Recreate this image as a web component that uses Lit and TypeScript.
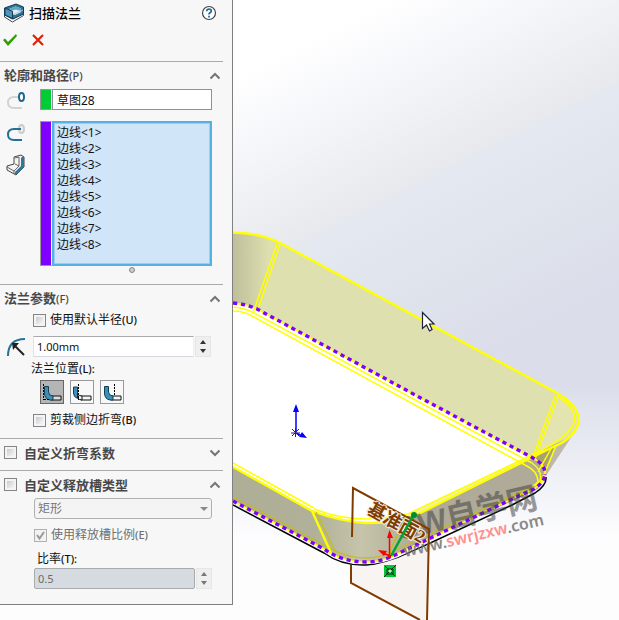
import { LitElement, html, svg, css } from "lit";
import { customElement } from "lit/decorators.js";

const BACK_EDGE = "M233 303Q246 304 257 309L430 403L533 458Q546 465 545 475";
const FRONT_EDGE = "M233 501L324 549Q342 562 366 562Q380 562 393 556L510 500L534 489Q545 482 545 473";

@customElement("model-view")
class ModelView extends LitElement {
  static styles = css`
    :host { display: block; }
    svg { display: block; width: 100%; height: 100%; }
    .y { fill: none; stroke: #ffff00; stroke-width: 1.5; }
    .thick { stroke-width: 2.4; }
    .dim { fill: none; stroke: #c4be16; stroke-width: 1.3; }
    .dots { fill: none; stroke: #8000ff; stroke-width: 3.4; stroke-dasharray: 4.2 3.8; }
    .brown { fill: none; stroke: #803c00; stroke-width: 2; }
    .plane { font: bold 18px "Liberation Serif", "Noto Sans CJK SC", sans-serif; fill: #803c00; stroke: #f4eee0; stroke-width: 2; paint-order: stroke; }
    .mark { font: bold 31px "Liberation Sans", "Noto Sans CJK SC", sans-serif; fill: #404040; opacity: .52; }
    .site { font: 600 16px "Noto Sans", sans-serif; fill: #6c6c6c; opacity: .8; }
    .red { fill: #ff7676; }
  `;
  render() {
    return html`<svg viewBox="233 0 386 620" preserveAspectRatio="xMinYMin meet" role="img" aria-label="Model">
      ${svg`
      <defs>
        <linearGradient id="corner" x1="233" x2="270" y1="0" y2="0" gradientUnits="userSpaceOnUse">
          <stop offset="0" stop-color="#bfbf9b"/><stop offset="1" stop-color="#dfe0b0"/>
        </linearGradient>
        <linearGradient id="front" x1="233" x2="430" y1="0" y2="0" gradientUnits="userSpaceOnUse">
          <stop offset="0" stop-color="#aead95"/><stop offset=".42" stop-color="#b1b099"/><stop offset=".65" stop-color="#c6c5ab"/><stop offset="1" stop-color="#aaa492"/>
        </linearGradient>
        <linearGradient id="side" x1="540" x2="566" y1="0" y2="10" gradientUnits="userSpaceOnUse">
          <stop offset="0" stop-color="#8d855f"/><stop offset="1" stop-color="#bdb8a9"/>
        </linearGradient>
      </defs>
      <path fill="#fff" d="M233 303L257 309L533 460L545 475L366 560L233 500Z"/>
      <path fill="#dfe0b0" d="M279 244L557 393Q576 404 578 420Q576 437 553 447L535 458L257 309Z"/>
      <path fill="#e3e4b0" d="M557 393Q576 404 578 420Q576 437 537 453Z"/>
      <path fill="url(#corner)" d="M233 232Q260 233 280 243L257 309Q246 304 233 303Z"/>
      <path fill="url(#side)" d="M572 436L547 474L530 490L520 460Z"/>
      <path fill="#b0aa98" d="M536 457L410 516L384 558L510 502L538 489L545 474Z"/>
      <path fill="url(#front)" d="M233 467L312 510Q342 524 383 522L412 515L420 543L393 556Q380 562 366 562Q342 562 324 549L233 501Z"/>
      <path fill="#f3f2a6" d="M553 447L410 518L406 514L535 453Z"/>
      <path fill="#a7a071" d="M532 458L554 447L545 471L538 463Z"/>
      <path class="y thick" d="M233 232.500Q260 233 280 243L557 393Q578 405 579 420Q576 438 553 447L410 518Q392 523 365 523Q338 521 312 511L233 467"/>
      <path class="y" d="M557 396Q575 407 575 420Q571 436 536 453L408 514M314 509Q340 519 366 519Q390 518 407 514M233 463L314 508"/>
      <path class="y" d="M280 244L258 309M277 244L253 313M559 394L535 459M555 396L533 457"/>
      <path class="y" d="M233 307Q245 308 254 313L532 463Q543 471 540 481L535 486M233 311Q244 311 252 316L525 465Q538 471 538 482L533 486"/>
      <path class="y" d="M556 446L540 484M552 447L538 472"/>
      <path class="dim" d="M233 497L326 546Q345 558 366 558Q380 558 391 552L507 498L534 486M316 512L335 551M405 518L389 553"/>
      <path class="y thick" d="M312 511L331 553"/>
      <path fill="none" stroke="#000" stroke-width="1.5" d="M233 505L324 553Q342 566 366 565Q382 565 398 558L512 505L535 493Q547 485 546 477"/>
      <path class="y" d=${FRONT_EDGE}></path>
      <path class="dots" d=${FRONT_EDGE}></path>
      <path class="y" d=${BACK_EDGE}></path>
      <path class="dots" d=${BACK_EDGE}></path>
      <path fill="#f8f4f2" d="M351 567Q370 568 398 558L428 545L427 620L418 620L351 583Z"/>
      <text class="mark" transform="translate(400 540) rotate(-13)">SW自学网</text>
      <text class="site" transform="translate(405 557) rotate(-13)">www.<tspan class="red">swrjzxw</tspan>.com</text>
      <path class="brown" d="M352 537L353 488L429 529L427 620M351 565V583L420 620"/>
      <text class="plane" transform="translate(366 513) rotate(29)">基准面2</text>
      <path stroke="#00a52e" stroke-width="2.500" d="M391 556L413 516"/>
      <circle cx="414" cy="515" r="3" fill="#008c2c"/>
      <path stroke="#f00" stroke-width="1.5" d="M389.500 557V537M390 556L383 553"/>
      <path fill="#f00" d="M389.500 530L393 538H387ZM378 550L387 551L384 556ZM388 555H391V558H388Z"/>
      <path fill="#00c832" d="M384 565H396V577H384Z"/>
      <path fill="none" stroke="#102818" d="M384 577L396 565M385 566L395 576M387 569H393V574H387Z"/>
      <circle cx="390" cy="571" r="1.500" fill="#cfe8d0"/>
      <path stroke="#00f" stroke-width="1.5" fill="none" d="M296 432V412M296 433L302 436"/>
      <path fill="#00f" d="M296 404L299 412H293ZM307 438L302 432L299 437Z"/>
      <path stroke="#3a108c" fill="none" d="M291 433H300M295.500 428V437M292 429L299 436M299 429L292 436"/>
      <path fill="#fff" stroke="#1c2038" stroke-width="1.200" d="M422.500 312.500V328.500L426.500 325L429.500 331L432 329.500L429.500 324H434Z"/>
      `}
    </svg>`;
  }
}

const flange = (dash: number, pressed: boolean) => html`
  <button class="pos ${pressed ? "on" : ""}" aria-label="Flange position" aria-pressed=${pressed}>
    <svg width="22" height="22" viewBox="0 0 22 22">
      <path d="M10 15H20V19H10Z" fill=${pressed ? "#ddd" : "#f4f4f4"} stroke="#111"/>
      <path d=${dash === 7 ? "M2.500 6H6.500V17.500Q2.500 16 2.500 12Z" : "M3.500 5.500H7.500V11Q8 15 12 15V19H9Q3.500 18 3.500 12Z"} fill="#3e8fb4" stroke="#104058"/>
      <path d=${dash === 7 ? "M7 13Q8 15 11 15V19Q8 19 7 17Z" : ""} fill="#f4f4f4" stroke="#111"/>
      <path d="M${dash}.500 3V${dash === 13 ? 15 : 19}" stroke="#000" stroke-dasharray="2 1"/>
      <path d=${dash === 2 ? "M3 18.500H9" : ""} stroke="#000" stroke-dasharray="2 1"/>
    </svg>
  </button>`;

const chevron = (down = false) => html`<button class="fold" aria-label="Toggle section">
  <svg width="12" height="8" viewBox="0 0 12 8"><path d=${down ? "M1.500 1.500L6 6L10.500 1.500" : "M1.500 6.500L6 2L10.500 6.500"} fill="none" stroke="#757575" stroke-width="2"/></svg></button>`;

const spinner = () => html`<span class="spin">
  <button aria-label="Increase"><svg width="6" height="4"><path d="M0 4L3 0L6 4Z"/></svg></button>
  <button aria-label="Decrease"><svg width="6" height="4"><path d="M0 0H6L3 4Z"/></svg></button></span>`;

@customElement("app-root")
class AppRoot extends LitElement {
  static styles = css`
    :host {
      display: flex; align-items: flex-start; min-height: 100vh; overflow: hidden;
      font: 12px/16px "Noto Sans", "Noto Sans CJK SC", sans-serif; color: #111;
      background: linear-gradient(to bottom, #fff0 62%, #fdfdfe 87%),
        linear-gradient(153deg, #fff 21%, #f4f5f9 31%, #e9eaed 41%, #e4e8f0 43%, #dfe3ec 54%, #dbdeea 64%);
    }
    * { box-sizing: border-box; }
    button { padding: 0; border: 0; background: none; font: inherit; }
    svg { display: block; flex: none; }
    model-view { flex: 1; min-width: 0; height: 100vh; }
    .panel { flex: none; width: 233px; background: #f7f7f7; border-right: 1px solid #808080; border-bottom: 1px solid #808080; }
    .title { display: flex; align-items: center; height: 26px; padding: 0 15px 0 4px; gap: 5px; }
    h1 { flex: 1; margin: 0; font-size: 13px; font-weight: 500; color: #000; }
    .actions { display: flex; align-items: center; gap: 14px; height: 35px; padding: 0 2px 7px; }
    section { margin-right: 9px; border-top: 1px solid #aaa; }
    header { display: flex; align-items: center; height: 27px; padding: 0 2px 0 4px; }
    h2 { flex: 1; margin: 0; font-size: 13px; font-weight: bold; color: #484848; }
    h2 label { margin-left: 7px; }
    small { font-size: 11px; font-weight: 500; }
    .folded { padding-bottom: 4px; }
    .body { display: flex; flex-direction: column; }
    .row { display: flex; align-items: center; }
    .selection { display: flex; padding: 0 11px 0 6px; }
    .icons { display: flex; flex-direction: column; gap: 11px; width: 34px; }
    .bar { width: 12px; border: 1px solid #999; border-right: 1px solid #f7f7f7; }
    .green { background: #00cc33; }
    .purple { background: #8000ff; }
    .text { flex: 1; min-width: 0; height: 21px; padding: 0 4px; border: 1px solid #8a8fa5; background: #fff; font: inherit; color: #111; }
    .list { flex: 1; min-width: 0; height: 145px; padding: 0; border: 2px solid #55b0e4; outline: 1px solid #9ccdf0; outline-offset: -3px; background: #d0e5f8; font: inherit; color: #111; overflow: hidden; border-radius: 0; appearance: none; scrollbar-width: none; }
    .list option { height: 16px; min-height: 16px; padding: 0 3px; line-height: 14px; }
    .grip { align-self: flex-end; width: 6px; height: 6px; margin: 1px 88px 11px 0; border: 1px solid #888; border-radius: 50%; background: #ccc; }
    .gap { margin-top: 11px; }
    .params { padding: 0 12px 10px 6px; }
    .indent { padding-left: 27px; }
    .check { display: flex; align-items: center; gap: 4px; height: 16px; }
    input[type="checkbox"] { flex: none; appearance: none; width: 13px; height: 13px; margin: 0; border: 1px solid #858585; background: linear-gradient(135deg, #c9ccd3, #f6f6f6) content-box, #f4f4f4; padding: 2px; }
    input[type="checkbox"]:checked { padding: 0; background: #f2f2f2; }
    .tick { display: grid; }
    .tick > * { grid-area: 1 / 1; }
    .number { height: 21px; margin-top: 8px; }
    .number .text { border-color: #aaa #eee #d8d8e2 #e2e3ea; padding: 0 3px; font-size: 11px; }
    .spin { display: flex; flex-direction: column; justify-content: space-around; align-items: center; flex: none; width: 16px; height: 21px; margin-left: 1px; background: #efefef; border: 1px solid #e6e6e6; }
    .spin svg { fill: #333; }
    .caption { padding-left: 25px; height: 16px; margin-top: 4px; }
    .positions { display: flex; gap: 6px; height: 24px; margin: 3px 0 8px; padding-left: 34px; }
    .pos { width: 24px; border: 1px solid #999; background: #f8f8f8; }
    .on { border-color: #666; background: #b5b5b5; }
    .relief { padding: 0 11px 15px 34px; }
    .relief .caption { padding-left: 3px; margin-top: 8px; }
    .relief .number { margin-top: 1px; }
    .relief .number .text { border: 1px solid #a8aaae; border-radius: 2px; background: #d6dbe1; color: #6b6b6b; }
    .relief .spin svg { fill: #777; }
    .relief .check { margin-top: 8px; color: #707070; }
    .relief input[type="checkbox"] { border-color: #b0b0b0; }
    .drop { display: grid; align-items: center; }
    .drop > * { grid-area: 1 / 1; }
    .drop svg { justify-self: end; margin-right: 4px; }
    .drop select { appearance: none; width: 100%; height: 21px; padding: 0 3px; border: 1px solid #b0b0b0; border-radius: 3px; background: #f4f4f4; color: #777; font: inherit; opacity: 1; }
  `;
  render() {
    return html`
      <form class="panel" @submit=${(e: Event) => e.preventDefault()}>
        <div class="title">
          <svg width="20" height="20" viewBox="0 0 20 20">
            <path d="M.500 11L8 16L19.500 9.500V12.500L8.500 19L.500 14Z" fill="#fff" stroke="#444"/>
            <path d="M.500 5L12 1L19.500 4V11L9 16L.500 12Z" fill="#2f7398" stroke="#143d54"/>
            <path d="M4 6.500L11.500 3.500L17 5.500V9L11 12L8.500 10.500V8.500Z" fill="#e4ecf0"/>
            <path d="M11.500 3.500L17 5.500V8L11.500 6.500L7 8L4 6.500Z" fill="#5fa5c6"/>
            <path d="M1 5L8.500 8.500V15.500L1 12Z" fill="#4f95ba" stroke="#143d54"/>
            <path d="M9 11.500L19 7" stroke="#a9d2e4"/>
          </svg>
          <h1>扫描法兰</h1>
          <button aria-label="Help"><svg width="16" height="16" viewBox="0 0 16 16"><circle cx="8" cy="8" r="6.500" fill="#fff" stroke="#444" stroke-width="1.200"/><path d="M5.700 6.300Q5.800 4.200 8 4.200Q10.300 4.200 10.300 6Q10.300 7.200 8.800 7.900Q8 8.300 8 9.500M8 10.700V12.400" fill="none" stroke="#247099" stroke-width="1.800"/></svg></button>
        </div>
        <div class="actions">
          <button aria-label="OK"><svg width="16" height="16" viewBox="0 0 16 16"><path d="M1 8L3 6.500L6 10L14 2L15 4L6 14Z" fill="#2f9e00"/></svg></button>
          <button aria-label="Cancel"><svg width="12" height="12" viewBox="0 0 12 12"><path d="M1 1L11 11M11 1L1 11" stroke="#e22000" stroke-width="2.200"/></svg></button>
        </div>

        <section>
          <header><h2>轮廓和路径<small>(P)</small></h2>${chevron()}</header>
          <div class="selection">
            <div class="icons">
              <svg width="22" height="21" viewBox="0 0 22 21"><path d="M12 8H8Q2 8 2 13.500Q2 19 8 19H16" fill="none" stroke="#d3d3d3" stroke-width="2"/><ellipse cx="15.500" cy="8" rx="2.500" ry="4" fill="#fff" stroke="#1c688e" stroke-width="2"/></svg>
            </div>
            <span class="bar green"></span>
            <input class="text" aria-label="轮廓" value="草图28">
          </div>
          <div class="selection gap">
            <div class="icons">
              <svg width="22" height="22" viewBox="0 0 22 22"><ellipse cx="15.500" cy="8" rx="2.500" ry="4" fill="#eee" stroke="#ccc" stroke-width="2"/><path d="M15 8H8Q2 8 2 13.500Q2 19 8 19H16" fill="none" stroke="#276e92" stroke-width="2"/></svg>
              <svg width="20" height="22" viewBox="0 0 20 22"><path d="M8 3L15 1L18 3V13L10 21L1 16V12L8 10Z" fill="#f4f4f4" stroke="#444"/><path d="M1 13L8 17L13 12V3L9 4M9 10L13 12M8 17V20" fill="none" stroke="#666"/><path d="M17 2L15 4V12L9 18V20L11 20L18 13V3Z" fill="#2d789c"/></svg>
            </div>
            <span class="bar purple"></span>
            <select class="list" multiple size="8" aria-label="路径">
              ${[1, 2, 3, 4, 5, 6, 7, 8].map((n) => html`<option>边线&lt;${n}&gt;</option>`)}
            </select>
          </div>
          <div class="body"><span class="grip"></span></div>
        </section>

        <section>
          <header><h2>法兰参数<small>(F)</small></h2>${chevron()}</header>
          <div class="body params">
            <div class="indent"><label class="check"><input type="checkbox"><span>使用默认半径<small>(U)</small></span></label></div>
            <div class="row number">
              <svg width="27" height="22" viewBox="0 0 27 22"><path d="M2 20Q2 3 19 3" fill="none" stroke="#267395" stroke-width="2"/><path d="M8 9L18 19" stroke="#222" stroke-width="2"/><path d="M6 7H13L7 14Z" fill="#222"/></svg>
              <input class="text" aria-label="半径" value="1.00mm">${spinner()}
            </div>
            <div class="caption">法兰位置<small>(L):</small></div>
            <div class="positions">${flange(2, true)}${flange(7, false)}${flange(13, false)}</div>
            <div class="indent"><label class="check"><input type="checkbox"><span>剪裁侧边折弯<small>(B)</small></span></label></div>
          </div>
        </section>

        <section class="folded">
          <header><input id="allow" type="checkbox"><h2><label for="allow">自定义折弯系数</label></h2>${chevron(true)}</header>
        </section>
        <section>
          <header><input id="relief" type="checkbox"><h2><label for="relief">自定义释放槽类型</label></h2>${chevron()}</header>
          <div class="body relief">
            <div class="drop">
              <select disabled aria-label="释放槽类型"><option>矩形</option></select>
              <svg width="8" height="4"><path d="M0 0H8L4 4Z" fill="#888"/></svg>
            </div>
            <label class="check"><span class="tick"><input type="checkbox" checked disabled><svg width="13" height="13" viewBox="0 0 13 13"><path d="M3 6L5.500 9.500L10 3" fill="none" stroke="#999" stroke-width="2"/></svg></span><span>使用释放槽比例<small>(E)</small></span></label>
            <label class="caption" for="ratio">比率<small>(T):</small></label>
            <div class="row number"><input id="ratio" class="text" disabled value="0.5">${spinner()}</div>
          </div>
        </section>
      </form>
      <model-view></model-view>
    `;
  }
}
